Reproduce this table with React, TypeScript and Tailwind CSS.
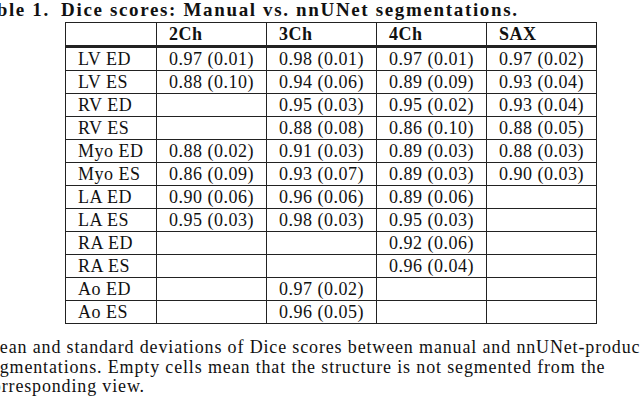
import React from "react";

const rows: [string, string, string, string, string][] = [
  ["LV ED", "0.97 (0.01)", "0.98 (0.01)", "0.97 (0.01)", "0.97 (0.02)"],
  ["LV ES", "0.88 (0.10)", "0.94 (0.06)", "0.89 (0.09)", "0.93 (0.04)"],
  ["RV ED", "", "0.95 (0.03)", "0.95 (0.02)", "0.93 (0.04)"],
  ["RV ES", "", "0.88 (0.08)", "0.86 (0.10)", "0.88 (0.05)"],
  ["Myo ED", "0.88 (0.02)", "0.91 (0.03)", "0.89 (0.03)", "0.88 (0.03)"],
  ["Myo ES", "0.86 (0.09)", "0.93 (0.07)", "0.89 (0.03)", "0.90 (0.03)"],
  ["LA ED", "0.90 (0.06)", "0.96 (0.06)", "0.89 (0.06)", ""],
  ["LA ES", "0.95 (0.03)", "0.98 (0.03)", "0.95 (0.03)", ""],
  ["RA ED", "", "", "0.92 (0.06)", ""],
  ["RA ES", "", "", "0.96 (0.04)", ""],
  ["Ao ED", "", "0.97 (0.02)", "", ""],
  ["Ao ES", "", "0.96 (0.05)", "", ""],
];

const headers = ["", "2Ch", "3Ch", "4Ch", "SAX"];
const widths = ["w-[91px]", "w-[110px]", "w-[109px]", "w-[110px]", "w-[110px]"];

export default function App() {
  return (
    <div
      className="w-[640px] h-[403px] overflow-hidden bg-white text-[#111]"
      style={{ fontFamily: '"Liberation Serif", "Times New Roman", serif' }}
    >
      {/* Caption title */}
      <div className="ml-[-27px] mt-[-1px] h-[23px] whitespace-nowrap text-[19px] font-bold leading-[22px] tracking-[1.65px]">
        Table 1.{"\u2002"}Dice scores: Manual vs. nnUNet segmentations.
      </div>

      {/* Table */}
      <table className="ml-[65px] table-fixed border-collapse text-[18px] leading-[22px] tracking-[0.5px]">
        <thead>
          <tr className="h-[23px]">
            {headers.map((h, i) => (
              <th
                key={i}
                className={`${widths[i]} border border-b-[3px] border-[#222] px-[12px] py-0 text-left font-bold`}
              >
                {h}
              </th>
            ))}
          </tr>
        </thead>
        <tbody>
          {rows.map((r) => (
            <tr key={r[0]} className="h-[23px]">
              {r.map((c, i) => (
                <td key={i} className="border border-[#222] px-[12px] py-0 whitespace-nowrap">
                  {c}
                </td>
              ))}
            </tr>
          ))}
        </tbody>
      </table>

      {/* Note */}
      <div className="ml-[-17px] mt-[14px] whitespace-nowrap text-[18px] leading-[19.5px] tracking-[0.85px]">
        <div>Mean and standard deviations of Dice scores between manual and nnUNet-produced</div>
        <div>segmentations. Empty cells mean that the structure is not segmented from the</div>
        <div>corresponding view.</div>
      </div>
    </div>
  );
}
